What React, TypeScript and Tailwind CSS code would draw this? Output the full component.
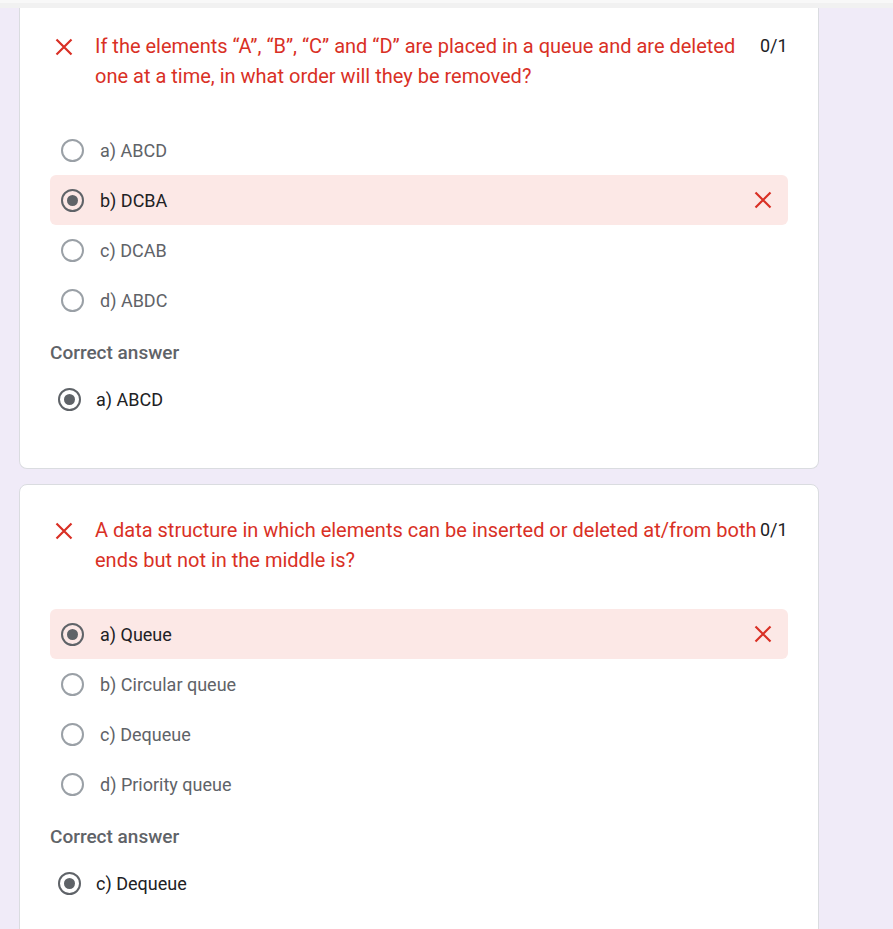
type Option = { label: string; picked?: boolean };

type Question = {
  title: string;
  score: string;
  options: Option[];
  correct: string;
};

const questions: Question[] = [
  {
    title:
      'If the elements “A”, “B”, “C” and “D” are placed in a queue and are deleted one at a time, in what order will they be removed?',
    score: '0/1',
    options: [
      { label: 'a) ABCD' },
      { label: 'b) DCBA', picked: true },
      { label: 'c) DCAB' },
      { label: 'd) ABDC' },
    ],
    correct: 'a) ABCD',
  },
  {
    title:
      'A data structure in which elements can be inserted or deleted at/from both ends but not in the middle is?',
    score: '0/1',
    options: [
      { label: 'a) Queue', picked: true },
      { label: 'b) Circular queue' },
      { label: 'c) Dequeue' },
      { label: 'd) Priority queue' },
    ],
    correct: 'c) Dequeue',
  },
];

function Cross({ size = 18 }: { size?: number }) {
  return (
    <svg width={size} height={size} viewBox="0 0 18 18" className="shrink-0">
      <path d="M1.5 1.5 L16.5 16.5 M16.5 1.5 L1.5 16.5" stroke="#d93025" strokeWidth="2.2" fill="none" />
    </svg>
  );
}

function Radio({ checked }: { checked?: boolean }) {
  return (
    <span
      className={`flex items-center justify-center w-[23px] h-[23px] rounded-full border-2 shrink-0 ${
        checked ? 'border-[#5f6368]' : 'border-[#9aa0a6]'
      }`}
    >
      {checked && <span className="w-[11px] h-[11px] rounded-full bg-[#5f6368]" />}
    </span>
  );
}

function QuestionCard({ q, first }: { q: Question; first?: boolean }) {
  return (
    <div
      className={`w-[800px] ml-[19px] bg-white border border-[#dadce0] px-[30px] pb-[44px] ${
        first ? 'border-t-0 rounded-b-lg pt-[23px]' : 'rounded-lg pt-[30px]'
      }`}
    >
      <div className="flex items-start">
        <div className="w-[45px] shrink-0 pl-[5px] pt-[7px]">
          <Cross size={18} />
        </div>
        <div className="w-[665px] shrink-0 text-[20px] leading-[30px] text-[#d93025]">{q.title}</div>
        <div className="text-[18px] leading-[30px] text-[#202124]">{q.score}</div>
      </div>

      <div className="mt-[34px] flex flex-col">
        {q.options.map((o) => (
          <div
            key={o.label}
            className={`flex items-center h-[50px] pl-[11px] pr-[16px] rounded-md ${
              o.picked ? 'bg-[#fce8e6]' : ''
            }`}
          >
            <Radio checked={o.picked} />
            <span
              className={`ml-[16px] flex-1 text-[18px] ${o.picked ? 'text-[#202124]' : 'text-[#5f6368]'}`}
            >
              {o.label}
            </span>
            {o.picked && <Cross size={18} />}
          </div>
        ))}
      </div>

      <div className="mt-[16px] text-[19px] leading-[24px] font-medium text-[#5f6368]">Correct answer</div>
      <div className="mt-[9px] flex items-center h-[50px] pl-[8px]">
        <Radio checked />
        <span className="ml-[15px] text-[18px] text-[#202124]">{q.correct}</span>
      </div>
    </div>
  );
}

export default function App() {
  return (
    <div className="h-[929px] overflow-hidden bg-[#f0ebf8] font-['Roboto',sans-serif]">
      <div className="h-[3px] bg-[#f8f8f8]" />
      <div className="h-[5px] bg-[#f1f1f1]" />
      <QuestionCard q={questions[0]} first />
      <div className="h-[15px]" />
      <QuestionCard q={questions[1]} />
    </div>
  );
}
